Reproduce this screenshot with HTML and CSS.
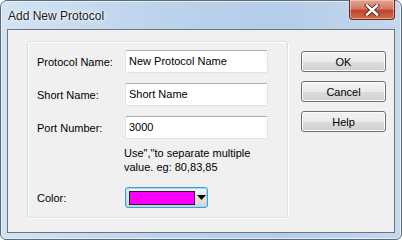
FILE: index.html
```html
<!DOCTYPE html>
<html>
<head>
    <title>Add New Protocol</title>
    <link rel="stylesheet" href="styles.css">
</head>
<body>
    <div class="window">
        <div class="titlebar">
            <span class="title">Add New Protocol</span>
            <div class="close-btn">
                <svg width="16" height="12" viewBox="0 0 16 12">
                    <path d="M3 1.5 L13 10.5 M13 1.5 L3 10.5" stroke="#5a2a20" stroke-width="4.2" stroke-linecap="square"/>
                    <path d="M3 1.5 L13 10.5 M13 1.5 L3 10.5" stroke="#ffffff" stroke-width="2.4" stroke-linecap="square"/>
                </svg>
            </div>
        </div>
        <div class="client">
            <div class="group">
                <div class="row">
                    <label class="label">Protocol Name:</label>
                    <div class="textbox">New Protocol Name</div>
                </div>
                <div class="row">
                    <label class="label">Short Name:</label>
                    <div class="textbox">Short Name</div>
                </div>
                <div class="row">
                    <label class="label">Port Number:</label>
                    <div class="textbox">3000</div>
                </div>
                <div class="hint">Use","to separate multiple<br>value. eg: 80,83,85</div>
                <div class="row color-row">
                    <label class="label">Color:</label>
                    <div class="combo">
                        <div class="swatch"></div>
                        <div class="arrow">
                            <svg width="9" height="5" viewBox="0 0 9 5"><path d="M0 0 H9 L4.5 5 Z" fill="#000"/></svg>
                        </div>
                    </div>
                </div>
            </div>
            <div class="buttons">
                <button class="btn">OK</button>
                <button class="btn">Cancel</button>
                <button class="btn">Help</button>
            </div>
        </div>
    </div>
</body>
</html>
```

FILE: styles.css
```css
body {
    margin: 0;
    font-family: "Liberation Sans", Arial, sans-serif;
    font-size: 11px;
    color: #000;
    background: #fff;
}

.window {
    width: 402px;
    height: 240px;
    box-sizing: border-box;
    border: 1px solid #5d6b78;
    border-radius: 7px 7px 6px 6px;
    background: linear-gradient(90deg, #d3e3f3 0%, #bcd3ec 40%, #b4cde8 70%, #c4d8ee 100%);
    box-shadow: inset 0 0 0 1px #e6f0fa;
    display: flex;
    flex-direction: column;
}

.titlebar {
    height: 28px;
    display: flex;
    align-items: flex-start;
    justify-content: space-between;
    padding-left: 7px;
}

.title {
    font-size: 12px;
    line-height: 12px;
    margin-top: 9px;
    color: #1b1b1b;
    text-shadow: 0 0 6px #fff, 0 0 3px #fff;
}

.close-btn {
    width: 44px;
    height: 19px;
    margin-right: 6px;
    margin-top: -1px;
    border: 1px solid #6b2d22;
    border-top: none;
    border-radius: 0 0 4px 4px;
    background: linear-gradient(180deg, #e6a394 0%, #d77a63 45%, #c2452a 55%, #cf6a4c 100%);
    box-shadow: inset 0 0 0 1px rgba(255, 220, 210, 0.5);
    display: flex;
    align-items: center;
    justify-content: center;
}

.client {
    flex: 1;
    margin: 0 6px 6px 6px;
    border: 1px solid #6a7580;
    background: #f0f0f0;
    display: flex;
    align-items: flex-start;
    padding: 11px 0 0 19px;
}

.group {
    width: 261px;
    height: 177px;
    box-sizing: border-box;
    border: 1px solid #d5dfe5;
    border-radius: 3px;
    box-shadow: inset 1px 1px 0 #fff, 1px 1px 0 #fff;
    padding: 8px 0 0 9px;
    display: flex;
    flex-direction: column;
}

.row {
    display: flex;
    align-items: center;
    margin-bottom: 10px;
}

.label {
    width: 88px;
    flex-shrink: 0;
}

.textbox {
    width: 143px;
    height: 23px;
    box-sizing: border-box;
    border: 1px solid #e2e3ea;
    border-top-color: #abadb3;
    border-radius: 2px;
    background: #fff;
    padding: 0 0 0 3px;
    line-height: 21px;
}

.hint {
    margin: -3px 0 0 87px;
    line-height: 14px;
}

.color-row {
    margin-top: 13px;
}

.combo {
    width: 83px;
    height: 21px;
    box-sizing: border-box;
    border: 1px solid #3c9fd6;
    border-radius: 3px;
    box-shadow: inset 0 0 0 1px #a6d8f3;
    background: linear-gradient(180deg, #f4f4f4 0%, #e4e4e4 50%, #d6d6d6 100%);
    display: flex;
    align-items: center;
    padding: 0 0 0 3px;
}

.swatch {
    width: 64px;
    height: 12px;
    border: 1px solid #222;
    background: #ff00ff;
}

.arrow {
    flex: 1;
    display: flex;
    justify-content: center;
    align-items: center;
}

.buttons {
    display: flex;
    flex-direction: column;
    gap: 9px;
    margin: 10px 0 0 13px;
}

.btn {
    width: 85px;
    height: 21px;
    font-family: "Liberation Sans", Arial, sans-serif;
    font-size: 11px;
    color: #000;
    border: 1px solid #707070;
    border-radius: 3px;
    background: linear-gradient(180deg, #f2f2f2 0%, #ebebeb 50%, #dddddd 51%, #cfcfcf 100%);
    box-shadow: inset 0 0 0 1px #fcfcfc;
    padding: 0;
}
```
